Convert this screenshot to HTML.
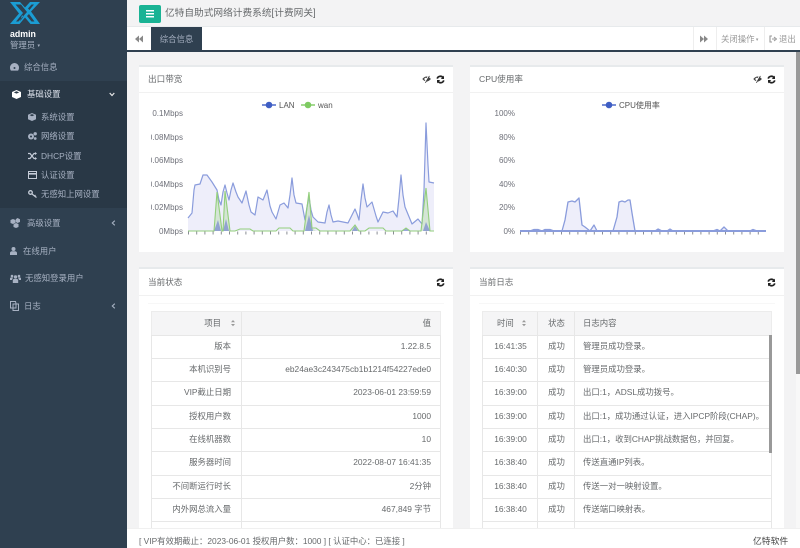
<!DOCTYPE html>
<html lang="zh"><head><meta charset="utf-8"><title>亿特自助式网络计费系统</title>
<style>
*{box-sizing:border-box}
html,body{margin:0;padding:0;width:800px;height:548px;overflow:hidden;background:#f3f3f4}
body{position:relative;font-family:"Liberation Sans","Noto Sans CJK SC",sans-serif;font-size:8.4px;color:#676a6c;filter:blur(.3px)}
.a{position:absolute;white-space:nowrap}
#side{left:0;top:0;width:127px;height:548px;background:#2f4050;overflow:hidden;color:#a7b1c2}
.m{position:absolute;white-space:nowrap;line-height:12px;font-size:8.4px}
.ic{position:absolute;fill:currentColor}
.panel{position:absolute;background:#fff;border-top:2px solid #e7eaec}
.ph{position:absolute;left:0;right:0;top:0;height:26px;border-bottom:1px solid #f1f1f1;font-size:8.6px;line-height:25px;padding-left:9px}
.row{position:absolute;height:25px;line-height:21.5px;border:1px solid #e7e7e7;border-bottom:0;background:#fff;overflow:hidden}
.row.h{background:#f5f5f6;border-color:#ececec;line-height:23px}
.row span{position:absolute;top:0;white-space:nowrap}
.l{left:151px;width:290px}
.r{left:482px;width:290px}
.l i{position:absolute;left:89px;top:0;bottom:0;border-left:1px solid #e7e7e7}
.r i{position:absolute;top:0;bottom:0;border-left:1px solid #e7e7e7}
.k{right:209px}.v{right:9px}
.t{left:0;width:55px;text-align:center}.s{left:55px;width:37px;text-align:center}.c{left:100px}
svg{position:absolute;overflow:hidden}
svg text{font-family:"Liberation Sans","Noto Sans CJK SC",sans-serif}
</style></head><body>

<svg width="0" height="0" style="position:absolute"><defs>
<g id="rf"><path d="M1.200 3.600A3.300 3.300 0 0 1 7 2.600M7.800 5.400A3.300 3.300 0 0 1 2 6.400" fill="none" stroke="#222" stroke-width="1.700"/><path d="M8 .6V4H4.800zM1 8.400V5H4.200z" fill="#222"/></g>
<g id="ey"><path d="M.3 4C1.800 2.200 3.200 1.500 4.600 1.500S7.400 2.200 8.900 4C7.400 5.800 6 6.500 4.600 6.500S1.800 5.800 .3 4z" fill="#444"/><circle cx="3.700" cy="4" r="1.300" fill="#fff"/><path d="M7 .6L2.800 7.600" stroke="#fff" stroke-width="1.500"/><path d="M7.400 .9L3.400 7.800" stroke="#333" stroke-width=".8"/></g>
<path id="sort" d="M2 0L4 2.200H0zM2 6.200L0 4H4z"/>
</defs></svg>

<!-- sidebar -->
<div class="a" id="side">
  <div class="a" style="left:0;top:81px;width:127px;height:127px;background:#293846"></div>
  <svg style="left:9px;top:1px" width="32" height="24" viewBox="0 0 32 24">
    <path d="M1 1H11L16 6.500 21 1H31L22 10.500 31 23H21.500L16 16.500 10.500 23H1L10 12.500zM6.500 3.500L14 12 7 20.500H9.500L18 11 12 3.500zM25 3.500H22.500L19 7.500 20.500 9zM14.500 15.500L13 14 11 20.500zM20 13L18 15 22.500 20.500H25.500z" fill="#1b9dd4" fill-rule="evenodd"/>
  </svg>
  <div class="a" style="left:10px;top:28px;color:#fff;font-weight:bold;font-size:8.800px;line-height:12px">admin</div>
  <div class="a" style="left:10px;top:39px;line-height:12px;font-size:8.400px">管理员 <span style="font-size:5px;vertical-align:1px">▾</span></div>

  <svg class="ic" style="left:10px;top:63px;color:#a7b1c2" width="9" height="8" viewBox="0 0 9 8"><path d="M4.500 0A4.500 4.500 0 0 0 0 4.500C0 6 .4 7 1 7.600H8C8.600 7 9 6 9 4.500A4.500 4.500 0 0 0 4.500 0z"/><circle cx="4.500" cy="5" r="1" fill="#2f4050"/></svg>
  <div class="m" style="left:24px;top:61px">综合信息</div>

  <svg class="ic" style="left:12px;top:90px;color:#fff" width="9" height="9" viewBox="0 0 9 9"><path d="M4.500 0L9 2V7L4.500 9 0 7V2zM4.500 1.200L1.800 2.400 4.500 3.600 7.200 2.400z"/></svg>
  <div class="m" style="left:27px;top:88px;color:#dfe4ed">基础设置</div>
  <svg style="left:109px;top:92px" width="6" height="5" viewBox="0 0 6 5"><path d="M.7 1L3 3.500 5.300 1" fill="none" stroke="#e8e8e8" stroke-width="1.200"/></svg>

  <svg class="ic" style="left:28px;top:113px" width="8" height="8" viewBox="0 0 9 9"><path d="M4.500 0L9 2V7L4.500 9 0 7V2zM4.500 1.200L1.800 2.400 4.500 3.600 7.200 2.400z"/></svg>
  <div class="m" style="left:41px;top:111px">系统设置</div>
  <svg class="ic" style="left:28px;top:132px" width="9" height="8" viewBox="0 0 9 8"><circle cx="3" cy="4.500" r="3"/><circle cx="3" cy="4.500" r="1" fill="#293846"/><circle cx="7.200" cy="1.800" r="1.700"/><circle cx="7.200" cy="6.500" r="1.400"/></svg>
  <div class="m" style="left:41px;top:130px">网络设置</div>
  <svg style="left:28px;top:152px" width="9" height="8" viewBox="0 0 9 8"><path d="M0 1.500H2L6 6.500H7.500M0 6.500H2L6 1.500H7.500" fill="none" stroke="#c5ccd8" stroke-width="1.200"/><path d="M7 0L9 1.500 7 3zM7 5L9 6.500 7 8z" fill="#c5ccd8"/></svg>
  <div class="m" style="left:41px;top:150px">DHCP设置</div>
  <svg style="left:28px;top:171px" width="9" height="8" viewBox="0 0 9 8"><rect x=".5" y=".5" width="8" height="7" fill="none" stroke="#c5ccd8"/><rect x="0" y="2" width="9" height="1.600" fill="#c5ccd8"/></svg>
  <div class="m" style="left:41px;top:169px">认证设置</div>
  <svg style="left:28px;top:190px" width="9" height="8" viewBox="0 0 9 8"><circle cx="2.500" cy="2.500" r="1.800" fill="none" stroke="#c5ccd8" stroke-width="1.300"/><path d="M4 4L8.500 7.500M6.500 6L7.500 5" stroke="#c5ccd8" stroke-width="1.200"/></svg>
  <div class="m" style="left:41px;top:188px">无感知上网设置</div>

  <svg class="ic" style="left:10px;top:218px" width="11" height="10" viewBox="0 0 11 10"><path d="M3 1L5.500 2V5L3 6 .5 5V2zM7.500 0L10 1.200V4L7.500 5 5.800 4V1.200zM6 5L8.500 6V9L6 10 3.500 9V6.500z"/></svg>
  <div class="m" style="left:27px;top:217px">高级设置</div>
  <svg style="left:111px;top:220px" width="5" height="6" viewBox="0 0 5 6"><path d="M3.800.7L1.300 3 3.800 5.300" fill="none" stroke="#a7b1c2" stroke-width="1.100"/></svg>

  <svg class="ic" style="left:10px;top:247px" width="7" height="8" viewBox="0 0 7 8"><circle cx="3.500" cy="2" r="2"/><path d="M0 8V6C0 4.800 1 4.200 2 4.200H5C6 4.200 7 4.800 7 6V8z"/></svg>
  <div class="m" style="left:23px;top:245px">在线用户</div>

  <svg class="ic" style="left:10px;top:274px" width="11" height="9" viewBox="0 0 11 9"><circle cx="5.500" cy="3" r="1.700"/><circle cx="2" cy="2" r="1.300"/><circle cx="9" cy="2" r="1.300"/><path d="M2.800 9V6.300C2.800 5.400 3.500 5 4.200 5H6.800C7.500 5 8.200 5.400 8.200 6.300V9zM0 6V4.500C0 3.800.5 3.500 1 3.500H3L2 6zM11 6V4.500C11 3.800 10.500 3.500 10 3.500H8L9 6z"/></svg>
  <div class="m" style="left:25px;top:272px">无感知登录用户</div>

  <svg style="left:10px;top:301px" width="9" height="10" viewBox="0 0 9 10"><path d="M.5.500H5.500L6 2.500V7H.5zM3 3H8.500V9.500H3z" fill="none" stroke="#a7b1c2"/></svg>
  <div class="m" style="left:24px;top:300px">日志</div>
  <svg style="left:111px;top:303px" width="5" height="6" viewBox="0 0 5 6"><path d="M3.800.7L1.300 3 3.800 5.300" fill="none" stroke="#a7b1c2" stroke-width="1.100"/></svg>
</div>

<!-- top bar -->
<div class="a" style="left:127px;top:0;width:673px;height:27px;background:#f3f3f4;border-bottom:1px solid #e7eaec"></div>
<div class="a" style="left:139px;top:5px;width:22px;height:18px;background:#1ab394;border-radius:2px"></div>
<svg style="left:146px;top:10px" width="8" height="8" viewBox="0 0 8 8"><path d="M0 0H8V1.500H0zM0 3H8V4.500H0zM0 6H8V7.500H0z" fill="#fff"/></svg>
<div class="a" style="left:165px;top:7px;font-size:9.700px;line-height:14px;color:#676a6c">亿特自助式网络计费系统[计费网关]</div>

<!-- tabs -->
<div class="a" style="left:127px;top:27px;width:673px;height:25px;background:#fff;border-bottom:2px solid #2f4050"></div>
<svg style="left:135px;top:35px" width="8" height="8" viewBox="0 0 8 8"><path d="M4 .5V7.500L0 4zM8 .5V7.500L4 4z" fill="#888"/></svg>
<div class="a" style="left:151px;top:27px;width:51px;height:25px;background:#2f4050;color:#a7b1c2;font-size:8.400px;line-height:24px;text-align:center">综合信息</div>
<div class="a" style="left:693px;top:27px;width:1px;height:23px;background:#eee"></div>
<svg style="left:700px;top:35px" width="8" height="8" viewBox="0 0 8 8"><path d="M0 .5V7.500L4 4zM4 .5V7.500L8 4z" fill="#888"/></svg>
<div class="a" style="left:716px;top:27px;width:1px;height:23px;background:#eee"></div>
<div class="a" style="left:721px;top:33px;font-size:8.400px;line-height:12px;color:#999">关闭操作<span style="font-size:5px;vertical-align:1px"> ▾</span></div>
<div class="a" style="left:764px;top:27px;width:1px;height:23px;background:#eee"></div>
<svg style="left:769px;top:35px" width="8" height="8" viewBox="0 0 8 8"><path d="M3 1H1V7H3M3 4H6M5 2L7.500 4 5 6" fill="none" stroke="#999" stroke-width="1.100"/></svg>
<div class="a" style="left:779px;top:33px;font-size:8.400px;line-height:12px;color:#999">退出</div>

<!-- scrollbar -->
<div class="a" style="left:796px;top:52px;width:4px;height:476px;background:#f8f8f8"></div>
<div class="a" style="left:796px;top:52px;width:4px;height:322px;background:#999"></div>

<!-- panels top -->
<div class="panel" style="left:139px;top:65px;width:314px;height:187px"><div class="ph">出口带宽</div></div>
<div class="panel" style="left:470px;top:65px;width:314px;height:187px"><div class="ph">CPU使用率</div></div>
<svg style="left:422px;top:75px" width="9" height="8"><use href="#ey"/></svg>
<svg style="left:436px;top:75px" width="9" height="9"><use href="#rf"/></svg>
<svg style="left:753px;top:75px" width="9" height="8"><use href="#ey"/></svg>
<svg style="left:767px;top:75px" width="9" height="9"><use href="#rf"/></svg>

<!-- left chart -->
<svg style="left:151px;top:96px" width="290" height="150" viewBox="151 96 290 150">
<g font-size="8" fill="#6e7079" text-anchor="end">
<text x="183" y="116">0.1Mbps</text><text x="183" y="140">0.08Mbps</text><text x="183" y="163">0.06Mbps</text><text x="183" y="187">0.04Mbps</text><text x="183" y="210">0.02Mbps</text><text x="183" y="234">0Mbps</text>
</g>
<path d="M188 233H434" stroke="#8a8d94" stroke-width="3" stroke-dasharray="1 7.200"/>
<path d="M188 231V218L192 213 194 190 195 185 200 184 203 175 207 175 212 182 217 190 219 200 221 205 223 192 225 185 227 193 229 200 231 190 233 183 236 192 238 197 242 203 244 197 246 191 249 205 251 212 255 215 257 203 258 197 263 200 265 195 267 190 270 206 272 212 276 219 280 205 284 203 288 208 290 195 292 178 294 195 296 203 302 204 305 220 307 207 309 197 311 210 313 217 318 222 325 223 327 212 329 205 331 215 333 222 338 221 348 223 352 215 355 209 357 214 359 220 361 200 363 184 365 198 367 207 372 202 376 216 378 222 383 212 388 213 393 211 397 217 399 198 401 175 403 195 405 207 412 224 418 219 422 224 424 190 426 123 428 165 429 182 434 183V231z" fill="#eeeefa" stroke="none"/>
<path d="M188 218L192 213 194 190 195 185 200 184 203 175 207 175 212 182 217 190 219 200 221 205 223 192 225 185 227 193 229 200 231 190 233 183 236 192 238 197 242 203 244 197 246 191 249 205 251 212 255 215 257 203 258 197 263 200 265 195 267 190 270 206 272 212 276 219 280 205 284 203 288 208 290 195 292 178 294 195 296 203 302 204 305 220 307 207 309 197 311 210 313 217 318 222 325 223 327 212 329 205 331 215 333 222 338 221 348 223 352 215 355 209 357 214 359 220 361 200 363 184 365 198 367 207 372 202 376 216 378 222 383 212 388 213 393 211 397 217 399 198 401 175 403 195 405 207 412 224 418 219 422 224 424 190 426 123 428 165 429 182 434 183" fill="none" stroke="#8a9cdc" stroke-width="1.200" stroke-linejoin="round"/>
<path d="M214 231L217 192 220 215 222 231H223L225 191 228 215 230 231ZM304 231L309 192 312 228 316 231ZM351 231L355 225 359 231ZM421 231L426 188 430 231Z" fill="#a3d48f" fill-opacity=".35"/>
<path d="M214 231L218 220 221 231H223L226 219 229 231ZM305 231L309 215 313 231ZM352 231L355 226 358 231ZM402 231L406 228 410 231ZM423 231L426 222 430 231Z" fill="#6f80d0" fill-opacity=".65"/>
<path d="M188 231H212L214 231 217 192 220 215 222 231H223L225 191 228 215 230 231H235L240 229H250L253 231H276L279 228 290 228 293 231H304L309 192 312 228 316 228 320 231H350L355 225 359 231H365L369 228H383L386 231H402L406 228 410 231H421L426 188 430 231H434" fill="none" stroke="#93cf7c" stroke-width="1.100"/>
<circle cx="269" cy="105" r="3.300" fill="#3f5fc4"/><path d="M262 105H276" stroke="#3f5fc4" stroke-width="1.400"/>
<text x="279" y="108" font-size="8" fill="#555">LAN</text>
<circle cx="308" cy="105" r="3.300" fill="#7ecb62"/><path d="M301 105H315" stroke="#7ecb62" stroke-width="1.400"/>
<text x="318" y="108" font-size="8" fill="#555">wan</text>
</svg>

<!-- right chart -->
<svg style="left:482px;top:96px" width="290" height="150" viewBox="482 96 290 150">
<g font-size="8" fill="#6e7079" text-anchor="end">
<text x="515" y="116">100%</text><text x="515" y="140">80%</text><text x="515" y="163">60%</text><text x="515" y="187">40%</text><text x="515" y="210">20%</text><text x="515" y="234">0%</text>
</g>
<path d="M520 233H766" stroke="#8a8d94" stroke-width="3" stroke-dasharray="1 7.200"/>
<path d="M520 231H530L534 229.500 538 229.500 542 231 545 229.500 550 229.500 554 231H562L565 220 568 202 572 201 575 202 578 199 579 198 582 225 585 227 590 231 594 225 597 231H613L617 217 619 202 622 201 625 202 628 200 630 200 632 213 635 231H655L658 229 662 231H667L670 229 673 231H713L717 229.500 720 231 724 227 728 231H750L753 229.500 757 231H766V231z" fill="#eeeefa"/>
<path d="M520 231H530L534 229.500 538 229.500 542 231 545 229.500 550 229.500 554 231H562L565 220 568 202 572 201 575 202 578 199 579 198 582 225 585 227 590 231 594 225 597 231H613L617 217 619 202 622 201 625 202 628 200 630 200 632 213 635 231H655L658 229 662 231H667L670 229 673 231H713L717 229.500 720 231 724 227 728 231H750L753 229.500 757 231H766" fill="none" stroke="#8a9cdc" stroke-width="1.300" stroke-linejoin="round"/>
<path d="M520 231H766" stroke="#8a9cdc" stroke-width="2"/>
<circle cx="609" cy="105" r="3.300" fill="#3f5fc4"/><path d="M602 105H616" stroke="#3f5fc4" stroke-width="1.400"/>
<text x="619" y="108" font-size="8" fill="#555">CPU使用率</text>
</svg>

<!-- panels bottom -->
<div class="panel" style="left:139px;top:267px;width:314px;height:262px"><div class="ph" style="height:27px;line-height:27px">当前状态</div></div>
<div class="panel" style="left:470px;top:267px;width:314px;height:262px"><div class="ph" style="height:27px;line-height:27px">当前日志</div></div>
<div class="a" style="left:479px;top:303px;width:296px;height:1px;background:#f7f7f7"></div>
<div class="a" style="left:148px;top:303px;width:296px;height:1px;background:#f7f7f7"></div>
<svg style="left:436px;top:278px" width="9" height="9"><use href="#rf"/></svg>
<svg style="left:767px;top:278px" width="9" height="9"><use href="#rf"/></svg>

<!-- left table -->
<div class="row l h" style="top:311px"><i></i><span style="right:219px">项目</span><svg style="left:79px;top:8px;fill:#999" width="4" height="7"><use href="#sort"/></svg><span class="v">值</span></div>
<div class="row l" style="top:335px"><i></i><span class="k">版本</span><span class="v">1.22.8.5</span></div>
<div class="row l" style="top:358px"><i></i><span class="k">本机识别号</span><span class="v">eb24ae3c243475cb1b1214f54227ede0</span></div>
<div class="row l" style="top:381px"><i></i><span class="k">VIP截止日期</span><span class="v">2023-06-01 23:59:59</span></div>
<div class="row l" style="top:405px"><i></i><span class="k">授权用户数</span><span class="v">1000</span></div>
<div class="row l" style="top:428px"><i></i><span class="k">在线机器数</span><span class="v">10</span></div>
<div class="row l" style="top:451px"><i></i><span class="k">服务器时间</span><span class="v">2022-08-07 16:41:35</span></div>
<div class="row l" style="top:475px"><i></i><span class="k">不间断运行时长</span><span class="v">2分钟</span></div>
<div class="row l" style="top:498px"><i></i><span class="k">内外网总流入量</span><span class="v">467,849 字节</span></div>
<div class="row l" style="top:521px"><i></i></div>

<!-- right table -->
<div class="row r h" style="top:311px"><i style="left:54px"></i><i style="left:91px"></i><span style="left:14px">时间</span><svg style="left:39px;top:8px;fill:#999" width="4" height="7"><use href="#sort"/></svg><span class="s">状态</span><span class="c">日志内容</span></div>
<div class="row r" style="top:335px"><i style="left:54px"></i><i style="left:91px"></i><span class="t">16:41:35</span><span class="s">成功</span><span class="c">管理员成功登录。</span></div>
<div class="row r" style="top:358px"><i style="left:54px"></i><i style="left:91px"></i><span class="t">16:40:30</span><span class="s">成功</span><span class="c">管理员成功登录。</span></div>
<div class="row r" style="top:381px"><i style="left:54px"></i><i style="left:91px"></i><span class="t">16:39:00</span><span class="s">成功</span><span class="c">出口:1，ADSL成功拨号。</span></div>
<div class="row r" style="top:405px"><i style="left:54px"></i><i style="left:91px"></i><span class="t">16:39:00</span><span class="s">成功</span><span class="c">出口:1，成功通过认证，进入IPCP阶段(CHAP)。</span></div>
<div class="row r" style="top:428px"><i style="left:54px"></i><i style="left:91px"></i><span class="t">16:39:00</span><span class="s">成功</span><span class="c">出口:1，收到CHAP挑战数据包，并回复。</span></div>
<div class="row r" style="top:451px"><i style="left:54px"></i><i style="left:91px"></i><span class="t">16:38:40</span><span class="s">成功</span><span class="c">传送直通IP列表。</span></div>
<div class="row r" style="top:475px"><i style="left:54px"></i><i style="left:91px"></i><span class="t">16:38:40</span><span class="s">成功</span><span class="c">传送一对一映射设置。</span></div>
<div class="row r" style="top:498px"><i style="left:54px"></i><i style="left:91px"></i><span class="t">16:38:40</span><span class="s">成功</span><span class="c">传送端口映射表。</span></div>
<div class="row r" style="top:521px"><i style="left:54px"></i><i style="left:91px"></i></div>
<div class="a" style="left:769px;top:335px;width:3px;height:118px;background:#999"></div>

<!-- footer -->
<div class="a" style="left:127px;top:528px;width:673px;height:20px;background:#fff;border-top:1px solid #f0f0f0"></div>
<div class="a" style="left:139px;top:535px;font-size:8.400px;line-height:12px">[ VIP有效期截止：2023-06-01 授权用户数：1000 ] [ 认证中心：已连接 ]</div>
<div class="a" style="left:753px;top:535px;font-size:8.800px;line-height:12px;color:#444">亿特软件</div>
</body></html>
